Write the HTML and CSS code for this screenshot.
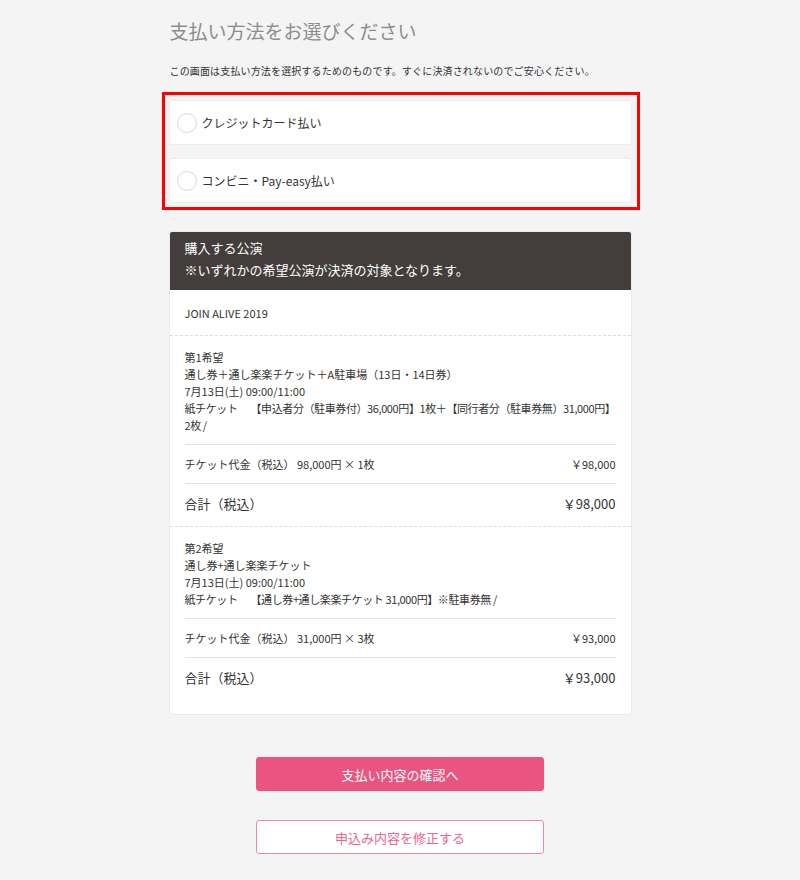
FILE: index.html
```html
<!DOCTYPE html>
<html lang="ja">
<head>
<meta charset="utf-8">
<title>支払い方法の選択</title>
<link rel="stylesheet" href="styles.css">
</head>
<body>
<main class="page">
  <h1 class="title">支払い方法をお選びください</h1>
  <p class="lead">この画面は支払い方法を選択するためのものです。すぐに決済されないのでご安心ください。</p>

  <div class="methods">
    <label class="method"><span class="radio"></span><span class="method-label">クレジットカード払い</span></label>
    <label class="method"><span class="radio"></span><span class="method-label">コンビニ・Pay-easy払い</span></label>
  </div>

  <section class="card">
    <div class="card-head">
      <div>購入する公演</div>
      <div>※いずれかの希望公演が決済の対象となります。</div>
    </div>
    <div class="event">JOIN ALIVE 2019</div>

    <div class="choice">
      <div class="detail">
        <div>第1希望</div>
        <div>通し券＋通し楽楽チケット＋A駐車場（13日・14日券）</div>
        <div>7月13日(土) 09:00/11:00</div>
        <div class="ticket-line">紙チケット<span class="gap"></span>【申込者分（駐車券付）36,000円】1枚＋【同行者分（駐車券無）31,000円】<br>2枚 /</div>
      </div>
      <div class="row price"><span>チケット代金（税込） 98,000円 × 1枚</span><span>￥98,000</span></div>
      <div class="row total"><span>合計（税込）</span><span>￥98,000</span></div>
    </div>

    <div class="choice">
      <div class="detail">
        <div>第2希望</div>
        <div>通し券+通し楽楽チケット</div>
        <div>7月13日(土) 09:00/11:00</div>
        <div class="ticket-line">紙チケット<span class="gap"></span>【通し券+通し楽楽チケット 31,000円】※駐車券無 /</div>
      </div>
      <div class="row price"><span>チケット代金（税込） 31,000円 × 3枚</span><span>￥93,000</span></div>
      <div class="row total"><span>合計（税込）</span><span>￥93,000</span></div>
    </div>
  </section>

  <div class="actions">
    <button class="btn btn-primary" type="button">支払い内容の確認へ</button>
    <button class="btn btn-outline" type="button">申込み内容を修正する</button>
  </div>
</main>
</body>
</html>
```
FILE: styles.css
```css
* { box-sizing: border-box; }
html, body { margin: 0; padding: 0; }
body {
  background: #f4f4f4;
  color: #333;
  font-family: "Noto Sans CJK JP", "Noto Sans", sans-serif;
}
.page {
  width: 463px;
  margin: 0 auto;
  padding-top: 18px;
  padding-bottom: 26px;
}
.title {
  margin: 0 0 0 1px;
  font-size: 19px;
  line-height: 26px;
  font-weight: normal;
  color: #8c8c8c;
}
.lead {
  margin: 19px 0 0 1px;
  font-size: 10px;
  line-height: 16px;
  letter-spacing: 0.15px;
  text-spacing-trim: space-all;
}
.methods {
  margin: 13px -8px 0 -7px;
  border: 3px solid #f00;
  padding: 5px 5px 4px 4px;
  display: flex;
  flex-direction: column;
  gap: 13px;
}
.method {
  display: flex;
  align-items: center;
  height: 45px;
  padding-left: 7px;
  background: #fff;
  border: 1px solid #ececec;
  border-radius: 3px;
  font-size: 12px;
  color: #333;
}
.radio {
  width: 20px;
  height: 20px;
  border-radius: 50%;
  border: 1px solid #d9d9d9;
  background: #fff;
  margin-right: 5px;
  flex: none;
}
.card {
  margin-top: 21px;
  background: #fff;
  border: 1px solid #ebebeb;
  border-radius: 3px;
  overflow: hidden;
  padding-bottom: 14px;
}
.card-head {
  background: #433e3c;
  color: #fff;
  font-size: 13px;
  line-height: 22px;
  padding: 5px 15px 9px;
  text-spacing-trim: space-all;
}
.event {
  height: 46px;
  display: flex;
  align-items: center;
  padding: 0 15px;
  font-size: 11px;
  border-bottom: 1px dashed #ddd;
}
.choice {
  padding: 13px 15px 0;
}
.choice + .choice {
  border-top: 1px dashed #ddd;
}
.detail {
  font-size: 11px;
  line-height: 17px;
  padding-bottom: 10px;
  border-bottom: 1px solid #e3e3e3;
}
.ticket-line {
  letter-spacing: -0.4px;
}
.gap {
  display: inline-block;
  width: 13px;
}
.row {
  display: flex;
  justify-content: space-between;
  align-items: center;
}
.price {
  height: 39px;
  font-size: 11px;
  border-bottom: 1px solid #e3e3e3;
}
.total {
  height: 42px;
  padding-bottom: 4px;
  font-size: 13px;
}
.actions {
  display: flex;
  flex-direction: column;
  align-items: center;
  gap: 29px;
  margin-top: 42px;
}
.btn {
  width: 288px;
  height: 34px;
  border-radius: 3px;
  font-family: inherit;
  font-size: 13px;
  cursor: pointer;
}
.btn-primary {
  background: #e95580;
  border: 1px solid #e95580;
  color: #fff;
}
.btn-outline {
  background: #fff;
  border: 1px solid #ee86a5;
  color: #e9668c;
}
```
